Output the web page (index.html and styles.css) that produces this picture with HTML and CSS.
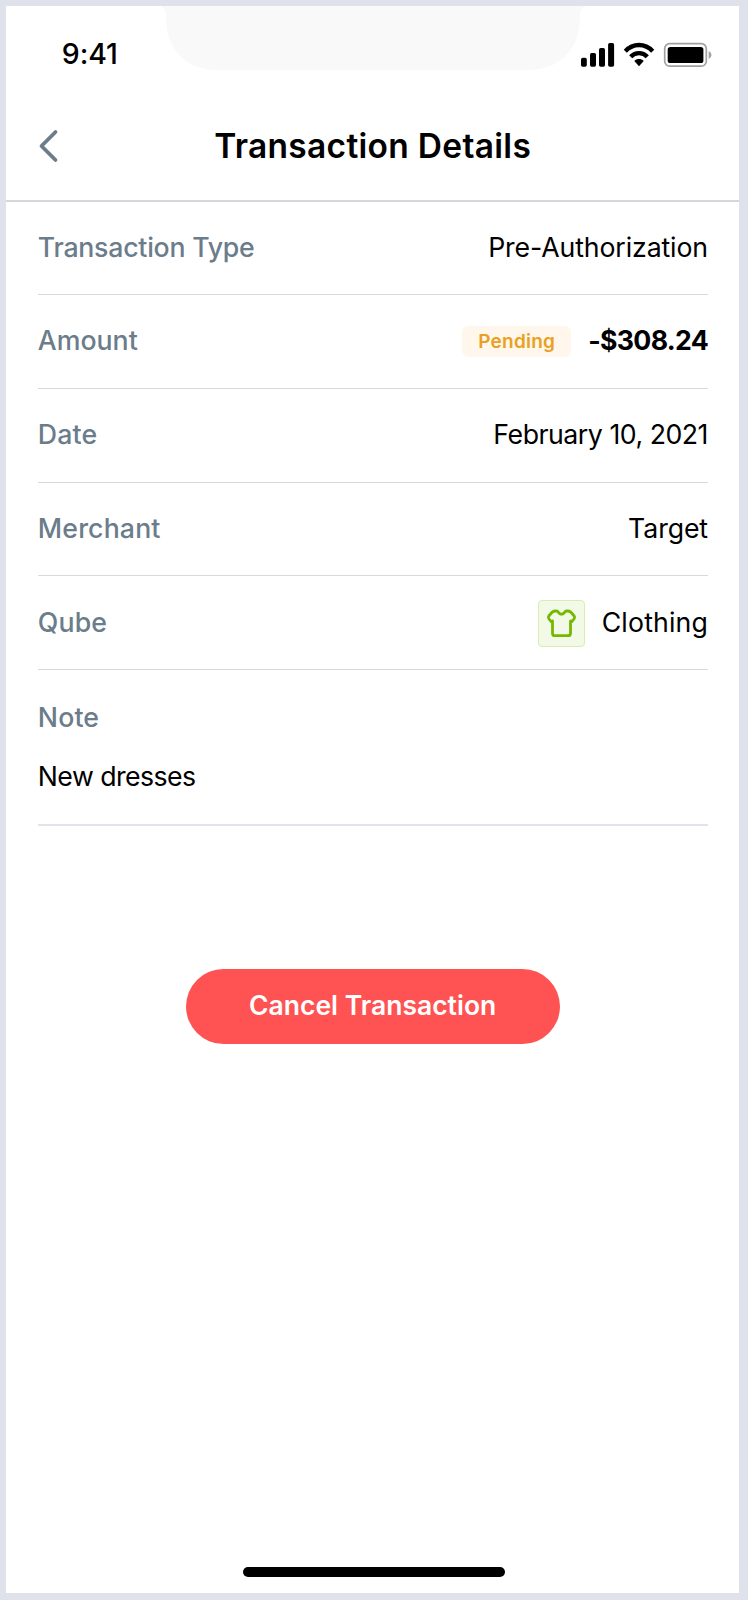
FILE: index.html
```
<!DOCTYPE html>
<html lang="en">
<head>
<meta charset="utf-8">
<title>Transaction Details</title>
<link rel="stylesheet" href="styles.css">
</head>
<body>
<div class="screen">
  <div class="status-bar">
    <span class="time">9:41</span>
    <svg class="notch" width="426" height="65" viewBox="0 0 426 65"><path d="M0 0C5 1 6 6 6.300 15C7 45 28 64 56 64H369C397 64 419 45 419.700 15C420 6 421 1 426 0Z" fill="#f9f9f9"/></svg>
    <svg class="status-icons" width="132" height="26" viewBox="0 0 132 26">
      <rect x="1" y="15.700" width="5.800" height="9" rx="1.700"/>
      <rect x="10" y="11" width="6" height="13.700" rx="1.700"/>
      <rect x="19" y="6" width="6" height="18.700" rx="1.700"/>
      <rect x="28.100" y="1" width="6" height="23.700" rx="1.700"/>
      <g fill="none" stroke="#000" stroke-width="4.300">
        <path d="M45.300 9.200C53 .9 65 .9 72.700 9.200"/>
        <path d="M50.700 14.800C55.300 9.900 62.700 9.900 67.300 14.800"/>
      </g>
      <path d="M54.300 18.900C57 16.500 61 16.500 63.700 18.900L59 24.200Z"/>
      <rect x="84.700" y="1.700" width="41.600" height="22.500" rx="5" fill="none" stroke="#a1a1a1" stroke-width="1.700"/>
      <rect x="87.700" y="5" width="35.700" height="16" rx="2.600"/>
      <path d="M128.700 9Q131.500 10.400 131.500 13T128.700 17Z" fill="#a1a1a1"/>
    </svg>
  </div>
  <header class="header">
    <svg class="back" width="22" height="34" viewBox="0 0 22 34"><path d="M18.500 3L4.500 17L18.500 31" fill="none" stroke="#6b7c8a" stroke-width="3.800" stroke-linecap="round" stroke-linejoin="round"/></svg>
    <h1 class="title">Transaction Details</h1>
  </header>
  <main class="details">
    <div class="row"><span class="label type-label">Transaction Type</span><span class="value type-value">Pre-Authorization</span></div>
    <div class="row"><span class="label amount-label">Amount</span><span class="group"><span class="tag">Pending</span><strong class="amount">-$308.24</strong></span></div>
    <div class="row"><span class="label">Date</span><span class="value date-value">February 10, 2021</span></div>
    <div class="row"><span class="label">Merchant</span><span class="value merchant-value">Target</span></div>
    <div class="row"><span class="label">Qube</span><span class="group"><span class="qube"><svg width="31" height="29" viewBox="0 0 31 29"><path d="M9.500 2L11.500 2.200Q15.500 8.200 19.500 2.200L21.500 2Q23.500 2 24.700 3L28.200 7Q29.200 8.300 28.300 9.500L26 12.500Q25 13.500 24.500 12V24.200Q24.500 26.700 22 26.700H9Q6.500 26.700 6.500 24.200V12Q6 13.500 5 12.500L2.700 9.500Q1.800 8.300 2.800 7L6.300 3Q7.500 2 9.500 2Z" fill="none" stroke="#75b800" stroke-width="2.800" stroke-linejoin="round"/></svg></span><span class="value qube-value">Clothing</span></span></div>
    <div class="note"><span class="label">Note</span><p class="value note-text">New dresses</p></div>
  </main>
  <button class="cancel">Cancel Transaction</button>
  <div class="home-indicator"></div>
</div>
</body>
</html>
```
FILE: styles.css
```
* { box-sizing: border-box; }
body {
  margin: 0;
  height: 1600px;
  padding: 5.5px 9px 7.5px 6.3px;
  background: #dfe2ea;
  font-family: Inter, "Liberation Sans", sans-serif;
}
.screen {
  display: flex;
  flex-direction: column;
  height: 1587px;
  background: #fff;
  color: #000;
}
.status-bar {
  display: flex;
  justify-content: space-between;
  height: 88px;
  padding: 0 26.5px 0 55.5px;
}
.time { flex: none; width: 98px; padding-top: 30.5px; font-size: 28.5px; line-height: 36px; font-weight: 500; letter-spacing: -.1px; }
.notch { flex: none; margin-right: -6px; }
.status-icons { flex: none; margin-top: 36.5px; }
.header {
  display: grid;
  grid-template-columns: 60px 1fr 60px;
  align-items: center;
  height: 108.5px;
  padding: 0 30px 1px;
  border-bottom: 2px solid #d4d8dd;
}
.back { margin-left: 1px; }
.title { margin: 0; text-align: center; font-size: 33.5px; line-height: 40px; font-weight: 600; letter-spacing: .3px; white-space: nowrap; }
.details { margin-top: -.8px; padding: 0 31px 0 31.5px; }
.row {
  display: flex;
  justify-content: space-between;
  align-items: center;
  height: 93.8px;
  padding-bottom: 2px;
  border-bottom: 1px solid #d6dade;
}
.label { color: #6b7c8a; font-size: 26.7px; font-weight: 500; line-height: 34px; letter-spacing: .15px; }
.type-label { letter-spacing: -.25px; }
.amount-label { letter-spacing: 0; }
.value { font-size: 26.7px; font-weight: 400; line-height: 34px; }
.type-value { letter-spacing: -.12px; }
.date-value { letter-spacing: -.48px; }
.merchant-value { letter-spacing: -.1px; }
.qube-value { letter-spacing: .15px; }
.group { display: flex; align-items: center; gap: 17px; }
.tag {
  height: 31px;
  margin-top: 2px;
  padding: 0 16px;
  border-radius: 6px;
  background: #fff7eb;
  color: #eaa022;
  font-size: 19px;
  line-height: 31px;
  font-weight: 600;
  letter-spacing: .25px;
}
.amount { font-size: 26.7px; line-height: 34px; font-weight: 700; letter-spacing: -.7px; }
.qube {
  display: grid;
  place-items: center;
  width: 47px;
  height: 47px;
  margin-top: 3px;
  border: 1px solid #d9edb3;
  border-radius: 4px;
  background: #f3f9e7;
}
.note { height: 156px; padding-top: 30px; border-bottom: 2px solid #e2e4eb; }
.note-text { margin: 25px 0 0; letter-spacing: -.55px; }
.cancel {
  align-self: center;
  width: 374px;
  height: 75px;
  margin-top: 143px;
  padding: 0 0 4px;
  border: 0;
  border-radius: 38px;
  background: #ff5252;
  color: #fff;
  font: 600 26.5px/34px Inter, "Liberation Sans", sans-serif;
}
.home-indicator { align-self: center; width: 262px; height: 10px; margin: auto 0 15.5px 2px; border-radius: 5px; background: #000; }
```
